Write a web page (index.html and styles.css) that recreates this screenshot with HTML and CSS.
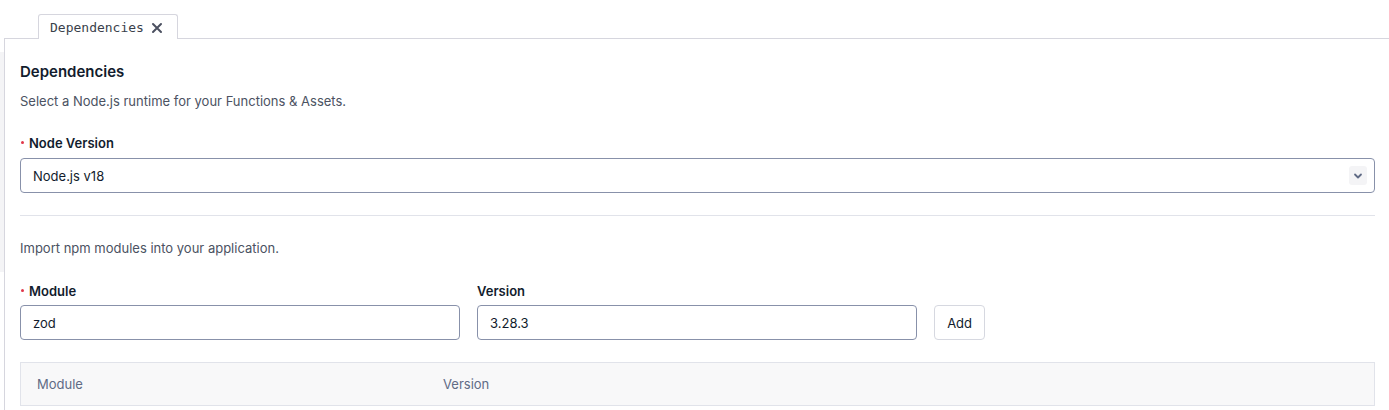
FILE: index.html
```html
<!DOCTYPE html>
<html lang="en">
<head>
    <meta charset="UTF-8">
    <meta name="viewport" content="width=device-width, initial-scale=1.0">
    <title>Dependencies</title>
    <link rel="stylesheet" href="styles.css">
</head>
<body>
    <div class="layout">
        <div class="gutter"><div class="gutter-block"></div></div>
        <div class="workspace">
            <div class="tab-bar">
                <div class="tab">
                    <span>Dependencies</span>
                    <svg class="tab-close" width="12" height="12" viewBox="0 0 12 12">
                        <path d="M2 2 L10 10 M10 2 L2 10" stroke="#4b5060" stroke-width="2" stroke-linecap="round"/>
                    </svg>
                </div>
            </div>

            <div class="panel">
                <h2 class="title">Dependencies</h2>
                <p class="help">Select a Node.js runtime for your Functions &amp; Assets.</p>

                <div class="field">
                    <label class="label required">Node Version</label>
                    <div class="select">
                        <span>Node.js v18</span>
                        <span class="chevron">
                            <svg width="10" height="8" viewBox="0 0 10 8">
                                <path d="M2 2.5 L5 5.5 L8 2.5" fill="none" stroke="#606b85" stroke-width="1.8" stroke-linecap="round" stroke-linejoin="round"/>
                            </svg>
                        </span>
                    </div>
                </div>

                <hr class="divider">

                <p class="help">Import npm modules into your application.</p>

                <div class="module-row">
                    <div class="field grow">
                        <label class="label required">Module</label>
                        <div class="input">zod</div>
                    </div>
                    <div class="field grow">
                        <label class="label">Version</label>
                        <div class="input">3.28.3</div>
                    </div>
                    <button class="btn">Add</button>
                </div>

                <table class="modules">
                    <thead>
                        <tr>
                            <th class="col-module">Module</th>
                            <th>Version</th>
                        </tr>
                    </thead>
                </table>
            </div>
        </div>
    </div>
</body>
</html>
```

FILE: styles.css
```css
body {
    margin: 0;
    padding: 0;
    font-family: Inter, "Noto Sans", sans-serif;
    color: #121c2d;
    background: #fff;
}
.layout {
    display: flex;
    min-height: 410px;
}
.gutter {
    width: 4px;
    flex-shrink: 0;
}
.gutter-block {
    margin-top: 52px;
    height: 220px;
    background: #f4f4f6;
}
.workspace {
    flex: 1;
    display: flex;
    flex-direction: column;
}
.tab-bar {
    padding: 14px 0 0 34px;
    display: flex;
}
.tab {
    display: flex;
    align-items: center;
    gap: 7px;
    height: 24px;
    padding: 0 14px 0 11px;
    border: 1px solid #d6d6de;
    border-bottom: none;
    border-radius: 3px 3px 0 0;
    background: #fff;
    font-family: "DejaVu Sans Mono", monospace;
    font-size: 13px;
    color: #3a3f4b;
    margin-bottom: -1px;
    position: relative;
}
.tab-close {
    margin-top: 1px;
}
.panel {
    flex: 1;
    border-top: 1px solid #d6d6de;
    border-left: 1px solid #d6d6de;
    padding: 22px 14px 0 15px;
}
.title {
    margin: 0;
    font-size: 15px;
    font-weight: 600;
    line-height: 22px;
}
.help {
    margin: 8px 0 0;
    font-size: 13px;
    line-height: 20px;
    color: #4b5262;
}
.field {
    margin-top: 22px;
    display: flex;
    flex-direction: column;
}
.grow {
    flex: 1;
}
.label {
    font-size: 13px;
    font-weight: 600;
    line-height: 20px;
    margin-bottom: 4px;
}
.required::before {
    content: "";
    display: inline-block;
    width: 3px;
    height: 3px;
    border-radius: 50%;
    background: #e0364a;
    margin: 0 5px 3px 1px;
    vertical-align: middle;
}
.select,
.input {
    box-sizing: border-box;
    height: 35px;
    border: 1px solid #8891aa;
    border-radius: 4px;
    padding: 0 12px;
    display: flex;
    align-items: center;
    font-size: 13px;
}
.select {
    justify-content: space-between;
    padding-right: 7px;
    margin-top: 1px;
}
.chevron {
    width: 18px;
    height: 19px;
    background: #f4f4f6;
    border-radius: 3px;
    display: flex;
    align-items: center;
    justify-content: center;
}
.divider {
    border: none;
    border-top: 1px solid #e1e3ea;
    margin: 22px 0 22px;
}
.module-row {
    display: flex;
    align-items: flex-end;
    gap: 17px;
}
.module-row .field {
    margin-top: 23px;
}
.btn {
    height: 35px;
    padding: 0 12px;
    background: #fff;
    border: 1px solid #d6d8e0;
    border-radius: 4px;
    font-family: inherit;
    font-size: 13px;
    color: #121c2d;
    margin-right: 390px;
}
.modules {
    width: 100%;
    margin-top: 22px;
    border-collapse: collapse;
    border: 1px solid #e1e3ea;
}
.modules th {
    background: #f8f8f9;
    text-align: left;
    font-weight: 400;
    font-size: 13px;
    color: #606b85;
    height: 42px;
    padding: 0 16px;
}
.col-module {
    width: 374px;
}
```
